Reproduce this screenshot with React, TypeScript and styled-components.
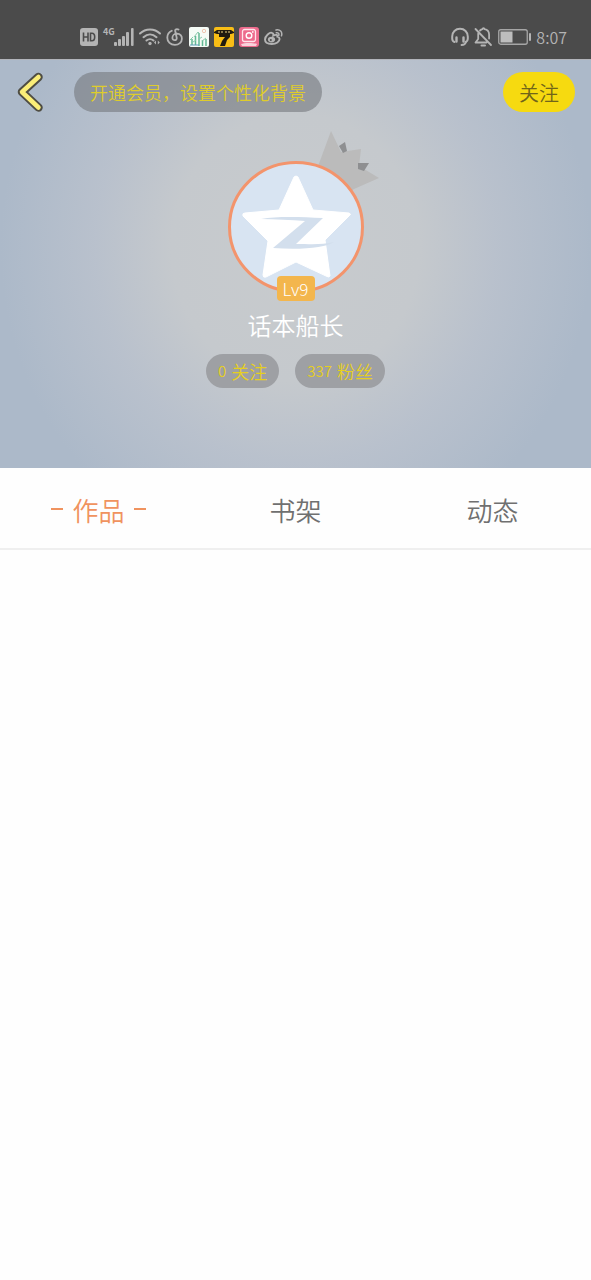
import React from "react";
import styled, { createGlobalStyle } from "styled-components";

const GlobalStyle = createGlobalStyle`
  * { box-sizing: border-box; }
  body {
    margin: 0;
    background: #fefefe;
    font-family: "Noto Sans CJK SC", sans-serif;
    font-weight: 350;
  }
  button { font: inherit; border: 0; padding: 0; cursor: pointer; }
`;

const Page = styled.div`
  display: flex;
  flex-direction: column;
  min-height: 100vh;
`;

const StatusBar = styled.div`
  display: flex;
  justify-content: space-between;
  align-items: center;
  height: 59px;
  padding: 14px 24px 0 80px;
  background: #4b4b4b;
  color: #b4b4b4;
`;

const StatusGroup = styled.div<{ $gap: number }>`
  display: flex;
  align-items: center;
  gap: ${(p) => p.$gap}px;
  svg { display: block; }
`;

const Time = styled.time`
  font-size: 16px;
  line-height: 22px;
`;

const Hero = styled.header`
  display: flex;
  flex-direction: column;
  padding-bottom: 80px;
  background:
    radial-gradient(ellipse 50% 78% at 50% 46%, #c8cbcd 0%, #c5c9cd 42%, rgba(190, 196, 206, 0.7) 68%, rgba(173, 185, 202, 0) 100%),
    #acb9c9;
  border-top: 1px solid #b2b4ba;
`;

const TopBar = styled.div`
  display: flex;
  align-items: center;
  padding: 12px 16px 0;
`;

const BackButton = styled.button`
  width: 28px;
  height: 40px;
  margin-right: 30px;
  background: none;
  svg { display: block; }
`;

const MemberButton = styled.button`
  height: 40px;
  && { padding: 0 16px; font-size: 18px; }
  border-radius: 20px;
  background: rgba(116, 120, 125, 0.6);
  color: #dfcc2c;
  line-height: 40px;
`;

const FollowButton = styled.button`
  height: 40px;
  margin-left: auto;
  && { padding: 0 16px; font-size: 20px; }
  border-radius: 20px;
  background: #f6da10;
  color: #71651a;
  line-height: 42px;
`;

const Profile = styled.section`
  display: flex;
  flex-direction: column;
  align-items: center;
`;

const AvatarFrame = styled.div`
  position: relative;
  width: 136px;
  height: 132px;
  margin-top: 49px;
`;

const Crown = styled.svg`
  position: absolute;
  left: 84px;
  top: -32px;
`;

const Avatar = styled.svg`
  position: relative;
  display: block;
`;

const Level = styled.span`
  position: absolute;
  left: 50%;
  top: 115px;
  transform: translateX(-50%);
  width: 38px;
  height: 25px;
  border-radius: 4px;
  background: #f3b64d;
  color: #fff;
  font-size: 17px;
  font-weight: 300;
  line-height: 26px;
  text-align: center;
`;

const Name = styled.h1`
  margin: 14px 0 0;
  color: #fff;
  font-size: 24px;
  font-weight: 350;
  line-height: 36px;
`;

const Stats = styled.div`
  display: flex;
  gap: 16px;
  margin-top: 11px;
`;

const Stat = styled.button`
  display: flex;
  gap: 5px;
  height: 34px;
  && { padding: 0 12px; font-size: 18px; }
  border-radius: 17px;
  background: #9ea0a4;
  color: #e6cf21;
  line-height: 34px;
`;

const Count = styled.span`
  font-size: 15px;
`;

const Tabs = styled.nav`
  display: grid;
  grid-template-columns: repeat(3, 1fr);
  border-bottom: 2px solid #efefef;
`;

const Tab = styled.button<{ $active?: boolean }>`
  display: flex;
  align-items: center;
  justify-content: center;
  gap: 9px;
  height: 80px;
  background: none;
  color: ${(p) => (p.$active ? "#f0935f" : "#707070")};
  && { font-size: 26px; padding-top: 2px; }
  &::before, &::after {
    content: "";
    display: ${(p) => (p.$active ? "block" : "none")};
    width: 12px;
    height: 2px;
    background: #f0935f;
  }
`;

const HdIcon = () => (
  <svg width="18" height="18" viewBox="0 0 18 18">
    <rect width="18" height="18" rx="3" fill="#b4b4b4" />
    <path d="M3.500 4.500v9M8 4.500v9M3.500 9H8M10.500 5.300v7.400h1.400c2 0 2.800-1.200 2.800-3.700s-.8-3.700-2.800-3.700z" fill="none" stroke="#4b4b4b" strokeWidth="1.600" />
  </svg>
);

const Network = styled.span`
  align-self: flex-start;
  margin-right: -6px;
  font-size: 9px;
  font-weight: 700;
  line-height: 9px;
`;

const SignalIcon = () => (
  <svg width="20" height="18" viewBox="0 0 20 18" fill="#b4b4b4">
    <rect x="0" y="14" width="3" height="4" rx="1" />
    <rect x="4" y="11" width="3" height="7" rx="1" />
    <rect x="8" y="8" width="3" height="10" rx="1" />
    <rect x="12" y="4" width="3" height="14" rx="1" />
    <rect x="17" y="0" width="2.600" height="18" rx="1" />
  </svg>
);

const WifiIcon = () => (
  <svg width="22" height="18" viewBox="0 0 22 18" fill="none" stroke="#b4b4b4" strokeWidth="2" strokeLinecap="round">
    <path d="M1 5.500C6.500 0 15.500 0 21 5.500M4.500 9.200c4-3.600 9-3.600 13 0M7.500 12.500c2-1.800 5-1.800 7 0" />
    <circle cx="11" cy="15.500" r="1.700" fill="#b4b4b4" stroke="none" />
    <path d="M17 12.500v4l-2-2zM18.800 12.500v4l2-2z" fill="#b4b4b4" stroke="none" />
  </svg>
);

const MusicIcon = () => (
  <svg width="18" height="18" viewBox="0 0 18 18" fill="none" stroke="#b4b4b4" strokeWidth="1.800" strokeLinecap="round">
    <path d="M12.500 1.600C10.800.6 8.900 1.500 9.200 3l1.500 6.700c.5 3.300-4.300 3.300-4.300.2 0-2.500 2-4.200 4.500-4.200 3.100.2 5 2.300 5 5 0 3.500-3 6.200-7 6.200-4.300 0-7.600-3-7.600-7.200 0-3.100 1.600-5.600 4.500-6.900" />
  </svg>
);

const BambooIcon = () => (
  <svg width="20" height="20" viewBox="0 0 20 20">
    <rect width="20" height="20" rx="2" fill="#f5fbf6" />
    <path d="M3 18v-6M6.500 18V9M10 19V6M13.500 19v-6M17 19v-7" stroke="#62b994" strokeWidth="1.500" />
    <path d="M1 13l3-3M5 10l4-5 2 2M10 12l3-2M13 14l4-3M4 15l3-2" fill="none" stroke="#8ac9ac" />
    <circle cx="15" cy="4" r="1.700" fill="none" stroke="#eeb7a0" strokeWidth=".8" />
    <path d="M1 18h9" stroke="#5f9dba" />
  </svg>
);

const SevenIcon = () => (
  <svg width="20" height="20" viewBox="0 0 20 20">
    <rect width="20" height="20" rx="2" fill="#f9be16" />
    <path d="M0 5l3-2h14l3 2v1l-3 1H3L0 6z" fill="#211b0f" />
    <path d="M5 7h11v3l-3 3-2 6H6l2-5 3-4H5z" fill="#211b0f" />
    <path d="M5 4v2M8 4v2M12 4v2M15 4v2" stroke="#f3d784" />
  </svg>
);

const CameraIcon = () => (
  <svg width="20" height="20" viewBox="0 0 20 20">
    <rect width="20" height="20" rx="3" fill="#ed6b8d" />
    <rect x="3.500" y="2.500" width="13" height="12" rx="2" fill="none" stroke="#ffe5eb" strokeWidth="1.300" />
    <circle cx="10" cy="8.500" r="2.800" fill="none" stroke="#fff" strokeWidth="1.400" />
    <path d="M13 5h1.500" stroke="#fff" strokeWidth="1.500" />
    <path d="M2 17c3-1.500 13-1.500 16 0l-1 2H3z" fill="#f9d3dc" />
  </svg>
);

const WeiboIcon = () => (
  <svg width="19" height="18" viewBox="0 0 19 18" fill="none" stroke="#b4b4b4">
    <path d="M7.700 4.800C6 3.800 1 8 1 11.500 1 14.500 4.200 16 7.800 16c4.500 0 7.800-2.500 7.800-4.900 0-1.500-1-2-2.300-2.400.5-1.700-.6-2.500-4-1.200.3-1.200.1-2.300-1.600-2.700z" strokeWidth="1.900" />
    <ellipse cx="7.500" cy="11.600" rx="3.600" ry="2.800" fill="#b4b4b4" stroke="none" />
    <circle cx="6.800" cy="12" r="1" fill="#4b4b4b" stroke="none" />
    <path d="M12 2c3.800-1 6.700 2 5.500 5.800M12.300 4.800c1.800-.4 3 .8 2.500 2.500" strokeWidth="1.500" strokeLinecap="round" />
  </svg>
);

const HeadsetIcon = () => (
  <svg width="18" height="20" viewBox="0 0 18 20" fill="none" stroke="#b4b4b4" strokeWidth="2" strokeLinecap="round">
    <path d="M3.500 15C2 14.500 1.200 13.500 1.200 11.500V9.500C1.200 5 4.500 1.800 9 1.800s7.800 3.200 7.800 7.700v2c0 2-.8 3-2.300 3.500" />
    <path d="M5.500 10.500v4M12.500 10.500v4" strokeWidth="2.400" />
    <path d="M15 15c-.5 2-1.800 3-4.500 3" strokeWidth="1.800" />
  </svg>
);

const MutedBellIcon = () => (
  <svg width="19" height="20" viewBox="0 0 19 20" fill="none" stroke="#b4b4b4" strokeWidth="1.800" strokeLinecap="round" strokeLinejoin="round">
    <path d="M1.500 2l15.500 16M4.200 6.500v5.500L1.500 15.500h11M6 3.500c.7-.7 1.600-1.200 2.500-1.400.2-1.300 1.800-1.300 2 0 2.800.5 4.600 2.500 4.600 5.400v4" />
    <path d="M7.500 18.500h3.500" strokeWidth="2" />
  </svg>
);

const BatteryIcon = () => (
  <svg width="33" height="18" viewBox="0 0 33 18">
    <rect x=".75" y="1.750" width="28.500" height="14.500" rx="2" fill="none" stroke="#a6a6a6" strokeWidth="1.300" />
    <rect x="2.500" y="3.500" width="12" height="11" fill="#bdbdbd" />
    <rect x="31" y="5" width="2" height="8" rx="1" fill="#b4b4b4" />
  </svg>
);

const BackIcon = () => (
  <svg width="28" height="40" viewBox="0 0 28 40" fill="none" strokeLinecap="round" strokeLinejoin="round">
    <path d="M22.500 5L6 20l16.500 15.500" stroke="#4f4d43" strokeWidth="8.500" />
    <path d="M22.500 5L6 20l16.500 15.500" stroke="#fbee78" strokeWidth="4.500" />
  </svg>
);

const App: React.FC = () => (
  <Page>
    <GlobalStyle />
    <StatusBar>
      <StatusGroup $gap={5}>
        <HdIcon />
        <Network>4G</Network>
        <SignalIcon />
        <WifiIcon />
        <MusicIcon />
        <BambooIcon />
        <SevenIcon />
        <CameraIcon />
        <WeiboIcon />
      </StatusGroup>
      <StatusGroup $gap={5}>
        <HeadsetIcon />
        <MutedBellIcon />
        <BatteryIcon />
        <Time>8:07</Time>
      </StatusGroup>
    </StatusBar>

    <Hero>
      <TopBar>
        <BackButton aria-label="返回"><BackIcon /></BackButton>
        <MemberButton>开通会员，设置个性化背景</MemberButton>
        <FollowButton>关注</FollowButton>
      </TopBar>
      <Profile>
        <AvatarFrame>
          <Crown width="70" height="66" viewBox="0 0 70 66">
            <path d="M19 2L5 40l30 24 7-4 25-11-20-12 2-17-20 3z" fill="#bbbbbb" />
            <path d="M27 17l6-4 2 9-4 2z" fill="#8e8f91" />
            <path d="M46 34h11l-5 8-6-2z" fill="#8e8f91" />
          </Crown>
          <Avatar width="136" height="132" viewBox="0 0 136 132" role="img" aria-label="头像">
            <ellipse cx="68" cy="66" rx="66.500" ry="64.500" fill="#d8e4f2" stroke="#f3946c" strokeWidth="3" />
            <path d="M66 16q2-2 4 0l15 33 36 3q3 1 0 3L97 79l5 36q-1 2-4 0L68 101l-30 15q-3 1-3-2l5-34-25-25q-1-3 2-3l34-3z" fill="#fff" stroke="#fff" strokeLinejoin="round" />
            <path d="M33 58c16-3 40-2 62-1L68 83c15 0 26 1 38-2-8 6-34 8-61 6L77 60c-14-1-30-2-44-2z" fill="#d3dfed" />
          </Avatar>
          <Level>Lv9</Level>
        </AvatarFrame>
        <Name>话本船长</Name>
        <Stats>
          <Stat><Count>0</Count>关注</Stat>
          <Stat><Count>337</Count>粉丝</Stat>
        </Stats>
      </Profile>
    </Hero>

    <Tabs>
      <Tab $active aria-current="page">作品</Tab>
      <Tab>书架</Tab>
      <Tab>动态</Tab>
    </Tabs>
  </Page>
);

export default App;
